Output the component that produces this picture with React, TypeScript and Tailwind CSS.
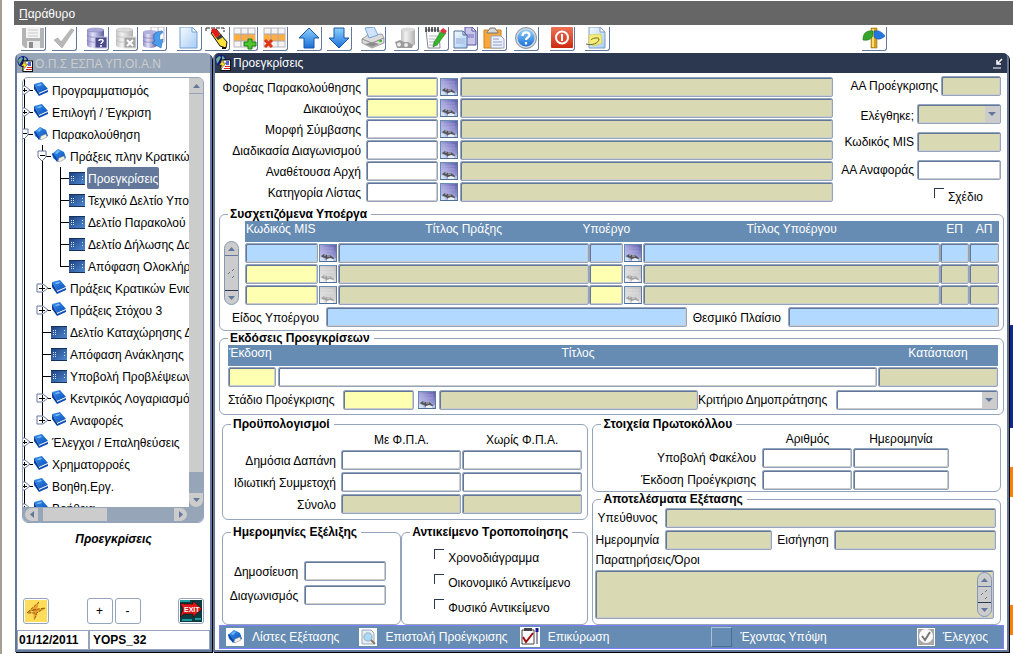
import type { ReactNode } from "react";

type Tone = "white" | "yellow" | "khaki" | "blue";

const TONES: Record<Tone, string> = {
  white: "bg-white",
  yellow: "bg-[#ffffb2]",
  khaki: "bg-[#d9d9b3]",
  blue: "bg-[#b2d9ff]",
};

const FIELD =
  "block h-5 w-full min-w-0 rounded-[2px] border border-[#93a4bb] px-1 shadow-[inset_1px_1px_0_#62779a,inset_-1px_-1px_0_#cccccc] outline-none";

function Field({ id, label, tone = "white" }: { id?: string; label?: string; tone?: Tone }) {
  return <input id={id} aria-label={label} type="text" className={`${FIELD} ${TONES[tone]}`} />;
}

function Select({ id, tone = "white" }: { id: string; tone?: Tone }) {
  return (
    <div className="relative">
      <select id={id} className={`${FIELD} appearance-none ${TONES[tone]}`}>
        <option></option>
      </select>
      <span className="pointer-events-none absolute top-[2px] right-[2px] bottom-[2px] flex w-[14px] items-center justify-center bg-[#cccccc]">
        <svg width="8" height="4" viewBox="0 0 8 4">
          <path d="M0 0h8L4 4z" fill="#62779a" />
        </svg>
      </span>
    </div>
  );
}

function LookupButton({ label, off = false }: { label: string; off?: boolean }) {
  return (
    <button
      type="button"
      aria-label={label}
      className="h-[18px] w-[18px] shrink-0 border border-[#668cb3] border-r-[#62779a] border-b-[#4d6d94]"
    >
      <svg width="16" height="16" viewBox="0 0 16 16">
        <rect width="16" height="16" fill={off ? "url(#lookupOff)" : "url(#lookupOn)"} />
        <path d="M1 3h13M1 6h13" stroke={off ? "#ececec" : "#b4b3e4"} strokeWidth="0.500" />
        <path d="M1 11l3-2 3 1 3 0 4 3v2H7l-2-2-3-1z" fill={off ? "#a4a4a4" : "#55555e"} />
        <path d="M0 12l3 1 2 3H0z" fill={off ? "#f2f2f2" : "#cfe2ee"} />
        <path d="M7 14l3-1 3 1v2H7z" fill={off ? "#fafafa" : "#e6f0f6"} />
        <path d="M4 10h2M7 11h3" stroke={off ? "#dddddd" : "#c4c4cc"} />
        <path d="M13 14l3-1v3h-3z" fill={off ? "#e2e2e2" : "#b4c4e0"} />
      </svg>
    </button>
  );
}

function Group({ title, className = "", children }: { title: string; className?: string; children: ReactNode }) {
  return (
    <fieldset className={`min-w-0 rounded-md border border-[#93a4bb] ${className}`}>
      <legend className="ml-2 h-[14px] px-[2px] pr-1 font-bold leading-[14px] whitespace-nowrap">{title}</legend>
      {children}
    </fieldset>
  );
}

function Check({ id, label }: { id: string; label: string }) {
  return (
    <div className="flex items-start gap-1">
      <input id={id} type="checkbox" className="h-[10px] w-[10px] appearance-none border-t border-l border-[#2b3850]" />
      <label htmlFor={id} className="pt-[2px] leading-[14px] whitespace-nowrap">{label}</label>
    </div>
  );
}

function VScroll({ className = "" }: { className?: string }) {
  return (
    <div className={`flex w-[15px] shrink-0 flex-col overflow-hidden rounded-full border border-[#8298b5] bg-[#cccccc] ${className}`}>
      <button type="button" aria-label="Πάνω" className="flex h-[14px] items-center justify-center border-b border-[#62779a]">
        <svg width="7" height="4" viewBox="0 0 7 4"><path d="M0 4L3.500 0 7 4z" fill="#62779a" /></svg>
      </button>
      <div className="flex flex-1 items-center justify-center">
        <svg width="7" height="9" viewBox="0 0 7 9"><path d="M0 5l2-2M4 2l2-2M4 9l2-2" stroke="#62779a" fill="none" /></svg>
      </div>
      <button type="button" aria-label="Κάτω" className="flex h-[14px] items-center justify-center border-t border-[#2b3850]">
        <svg width="7" height="4" viewBox="0 0 7 4"><path d="M0 0h7L3.500 4z" fill="#62779a" /></svg>
      </button>
    </div>
  );
}

/* ---------- toolbar drawings, all on a 24x24 grid ---------- */

function Gradients() {
  return (
    <svg width="0" height="0" className="absolute">
      <defs>
        <linearGradient id="dbPurple">
          <stop offset="0" stopColor="#8e8cc4" />
          <stop offset="0.35" stopColor="#e2e2f8" />
          <stop offset="1" stopColor="#5b5aa0" />
        </linearGradient>
        <linearGradient id="dbGray">
          <stop offset="0" stopColor="#c2c2c2" />
          <stop offset="0.35" stopColor="#f2f2f2" />
          <stop offset="1" stopColor="#b0b0b0" />
        </linearGradient>
        <linearGradient id="lookupOn" x1="0" y1="1" x2="1" y2="0">
          <stop offset="0" stopColor="#c8c8ee" />
          <stop offset="0.45" stopColor="#a9a8de" />
          <stop offset="1" stopColor="#5f5eac" />
        </linearGradient>
        <linearGradient id="lookupOff" x1="0" y1="1" x2="1" y2="0">
          <stop offset="0" stopColor="#e8e8e8" />
          <stop offset="1" stopColor="#c2c2c2" />
        </linearGradient>
        <linearGradient id="arrowBlue" x2="0" y2="1">
          <stop offset="0" stopColor="#8fd0ff" />
          <stop offset="1" stopColor="#1a6fd6" />
        </linearGradient>
        <linearGradient id="paper" x2="1" y2="1">
          <stop offset="0" stopColor="#f6fbff" />
          <stop offset="1" stopColor="#a8ccf4" />
        </linearGradient>
        <linearGradient id="red" x2="0" y2="1">
          <stop offset="0" stopColor="#ee7458" />
          <stop offset="1" stopColor="#cc2a10" />
        </linearGradient>
        <linearGradient id="screen" x2="1" y2="1">
          <stop offset="0" stopColor="#1c3f7e" />
          <stop offset="1" stopColor="#4f8ad0" />
        </linearGradient>
        <linearGradient id="cover" x2="1" y2="1">
          <stop offset="0" stopColor="#3a94f0" />
          <stop offset="1" stopColor="#0a4cb8" />
        </linearGradient>
      </defs>
    </svg>
  );
}

function Db({ gray = false }: { gray?: boolean }) {
  const line = gray ? "#b4b4b4" : "#8280bc";
  return (
    <>
      <path d="M3 3v15c0 4 17 4 17 0V3z" fill={gray ? "url(#dbGray)" : "url(#dbPurple)"} />
      <ellipse cx="11.500" cy="3" rx="8.500" ry="2" fill={gray ? "#dcdcdc" : "#a9a8d6"} stroke={line} strokeWidth="0.500" />
      <path d="M3 8c0 3 17 3 17 0M3 13c0 3 17 3 17 0" fill="none" stroke={line} strokeWidth="0.700" />
    </>
  );
}

function Grid() {
  return (
    <>
      <rect x="1" y="1" width="21" height="19" fill="#f4f4f4" stroke="#b8b8c0" />
      <rect x="1" y="7" width="21" height="7" fill="#ffae42" />
      <path d="M8 1v19M15 1v19M1 7h21M1 14h21" stroke="#a9a9b4" fill="none" />
    </>
  );
}

const TOOLS: { label: string; gap: string; icon: ReactNode }[] = [
  {
    label: "Αποθήκευση",
    gap: "",
    icon: (
      <>
        <path d="M1 1h22v20H4l-3-3z" fill="#b4b4b4" />
        <rect x="5" y="0" width="14" height="11" fill="#f4f4f4" />
        <path d="M7 3h10M7 6h10M7 9h10" stroke="#c8c8c8" />
        <rect x="6" y="14" width="13" height="7" fill="#ececec" />
        <rect x="8" y="15" width="4" height="6" fill="#8c8c8c" />
      </>
    ),
  },
  {
    label: "Επιβεβαίωση",
    gap: "ml-[6px]",
    icon: <path d="M2 13l4-2 3 4L19 2l3 1L10 21z" fill="#b8b8b8" stroke="#949494" strokeWidth="0.500" />,
  },
  {
    label: "Αναζήτηση",
    gap: "ml-[7px]",
    icon: (
      <>
        <Db />
        <rect x="11" y="10" width="12" height="11" fill="#4a4a8c" stroke="#c8c8e8" />
        <path d="M15 14c0-2 4-2 4 0 0 1.500-2 1.500-2 3M17 18v2" stroke="#fff" strokeWidth="1.500" fill="none" />
      </>
    ),
  },
  {
    label: "Ακύρωση αναζήτησης",
    gap: "ml-[4px]",
    icon: (
      <>
        <Db gray />
        <rect x="11" y="10" width="12" height="11" fill="#a6a6a6" stroke="#e2e2e2" />
        <path d="M14 13l6 6M20 13l-6 6" stroke="#fff" strokeWidth="2" />
      </>
    ),
  },
  {
    label: "Εκτέλεση αναζήτησης",
    gap: "ml-[4px]",
    icon: (
      <>
        <path d="M9 0h13v15H9zM16 0v15M9 6h13" fill="#fff" stroke="#b8b8cc" />
        <path d="M1 5v13c0 4 14 4 14 0V5z" fill="url(#dbPurple)" />
        <ellipse cx="8" cy="5" rx="7" ry="2" fill="#b2b1de" />
        <path d="M1 9c0 3 14 3 14 0M1 13c0 3 14 3 14 0" fill="none" stroke="#8280bc" strokeWidth="0.700" />
        <path d="M20 4c-8 0-10 5-7 10l-3 2 9 5 2-9-3 1c-1-4 0-6 3-8z" fill="#4a9cec" stroke="#1d5cac" strokeWidth="0.500" />
      </>
    ),
  },
  {
    label: "Νέο",
    gap: "ml-[10px]",
    icon: <path d="M3 0h12l5 5v16H3zM15 0v5h5" fill="url(#paper)" stroke="#6f9fd8" />,
  },
  {
    label: "Καθαρισμός",
    gap: "ml-[3px]",
    icon: (
      <>
        <path d="M1 1h18v4M1 1v3" stroke="#222" fill="none" strokeDasharray="4 1" />
        <path d="M6 6l5-4 11 13-1 6-6-2z" fill="#ffe23a" stroke="#111" />
        <path d="M6 4c1-3 4-3 6-1l3 5-4 3z" fill="#e01b1b" />
        <path d="M11 11l5-4 2 3-5 3z" fill="#3a3a3a" />
        <path d="M17 21h4" stroke="#111" strokeWidth="2" />
      </>
    ),
  },
  {
    label: "Εισαγωγή εγγραφής",
    gap: "ml-[3px]",
    icon: (
      <>
        <Grid />
        <path d="M15 12h4v3h4v4h-4v3h-4v-3h-4v-4h4z" fill="#4fc42c" stroke="#1e7d12" />
      </>
    ),
  },
  {
    label: "Διαγραφή εγγραφής",
    gap: "ml-[5px]",
    icon: (
      <>
        <Grid />
        <path d="M2 13l7 7M9 13l-7 7" stroke="#e03412" strokeWidth="3" />
      </>
    ),
  },
  {
    label: "Προηγούμενη εγγραφή",
    gap: "ml-[9px]",
    icon: <path d="M12 1l10 10h-5v10H7V11H2z" fill="url(#arrowBlue)" stroke="#1657a8" />,
  },
  {
    label: "Επόμενη εγγραφή",
    gap: "ml-[5px]",
    icon: <path d="M12 21l10-10h-5V1H7v10H2z" fill="url(#arrowBlue)" stroke="#1657a8" />,
  },
  {
    label: "Εκτύπωση",
    gap: "ml-[9px]",
    icon: (
      <>
        <path d="M1 12l6-4 14-1 2 4v5l-12 5L1 16z" fill="#dcdcdc" stroke="#7c7c7c" strokeWidth="0.700" />
        <path d="M4 1l9-1 4 8-9 3z" fill="#cfe4fb" stroke="#78a4d8" />
        <path d="M1 12l10 4 12-5" fill="none" stroke="#8e8e8e" />
        <path d="M4 17l8-2 6 2-7 3z" fill="#8d8d8d" />
        <rect x="18" y="13" width="3" height="2" fill="#45c02c" />
      </>
    ),
  },
  {
    label: "Λίστα τιμών",
    gap: "ml-[8px]",
    icon: (
      <>
        <path d="M7 2v15c0 3 14 3 14 0V2z" fill="url(#dbGray)" />
        <ellipse cx="14" cy="2.500" rx="7" ry="2" fill="#dcdcdc" />
        <path d="M1 15l5-2 4 2 4 0 5 3-1 3H3z" fill="#9c9c9c" />
        <circle cx="5" cy="17.500" r="2" fill="#ececec" />
        <circle cx="12" cy="18" r="2" fill="#ececec" />
      </>
    ),
  },
  {
    label: "Επεξεργασία",
    gap: "ml-[5px]",
    icon: (
      <>
        <path d="M2 3h13l1 18H4z" fill="#fdfdfd" stroke="#8888a0" />
        <path d="M2 0v5M5 0v5M8 0v5M11 0v5M14 0v5" stroke="#333" strokeWidth="1.500" />
        <path d="M5 9h9M5 12h6M5 15h7M5 18h9" stroke="#b6b6cc" />
        <path d="M18 3l4 3-9 12-4 2 1-5z" fill="#35b52a" stroke="#14680e" strokeWidth="0.500" />
        <path d="M16 4l3-3 4 3-3 3z" fill="#e23440" />
      </>
    ),
  },
  {
    label: "Αντιγραφή",
    gap: "ml-[4px]",
    icon: (
      <>
        <path d="M12 0h7l4 4v14H12zM19 0v4h4" fill="#c8c4ec" stroke="#5a529c" />
        <path d="M14 7h7v4h-7z" fill="#9f98d2" />
        <path d="M1 4h9l4 4v13H1zM10 4v4h4" fill="url(#paper)" stroke="#53729e" />
        <rect x="3" y="11" width="9" height="6" fill="#b2c8e8" />
      </>
    ),
  },
  {
    label: "Επικόλληση",
    gap: "ml-[4px]",
    icon: (
      <>
        <path d="M2 3h17v18H2z" fill="#f7a83c" stroke="#d07e18" />
        <path d="M5 6c0-2 2-2 3-5h5c1 3 3 3 3 5z" fill="#d8d8d8" stroke="#777" />
        <path d="M9 9h10l3 3v9H9z" fill="#eef2fc" stroke="#9aa4c8" />
        <path d="M11 12h6M11 15h9M11 18h9" stroke="#a8b8dc" strokeWidth="1.500" />
      </>
    ),
  },
  {
    label: "Βοήθεια",
    gap: "ml-[7px]",
    icon: (
      <>
        <circle cx="12" cy="11" r="10.500" fill="#d0d4dc" stroke="#8894a8" />
        <circle cx="12" cy="11" r="8.500" fill="url(#arrowBlue)" />
        <path d="M8.500 9c0-5 7-4.500 7-1 0 2.500-3.500 2.500-3.500 5M12 15v2.500" stroke="#fff" strokeWidth="2.200" fill="none" />
      </>
    ),
  },
  {
    label: "Έξοδος",
    gap: "ml-[11px]",
    icon: (
      <>
        <rect x="1" y="0" width="22" height="21" rx="1" fill="url(#red)" />
        <circle cx="12" cy="10.500" r="6" fill="none" stroke="#fff" strokeWidth="2" />
        <path d="M12 7v7" stroke="#fff" strokeWidth="2" />
      </>
    ),
  },
  {
    label: "Συνημμένα",
    gap: "ml-[10px]",
    icon: (
      <>
        <path d="M4 0h11l5 5v16H4zM15 0v5h5" fill="url(#paper)" stroke="#7e9cc4" />
        <path d="M4 8l12-1 1 9-8 3-5-2z" fill="#f7ec74" stroke="#c8ba4c" strokeWidth="0.500" />
        <path d="M1 17c6 2 13-1 13-5 0-2-7-1-8 1" fill="none" stroke="#5d6a30" />
      </>
    ),
  },
  {
    label: "Πλοήγηση",
    gap: "ml-[252px]",
    icon: (
      <>
        <path d="M9 1h6v20H9z" fill="#d9a01e" stroke="#86600c" strokeWidth="0.500" />
        <path d="M10 2h2v18h-2z" fill="#f8dc74" />
        <path d="M1 12c0-6 4-9 10-8v4c-1 4-5 6-10 5z" fill="#35a52c" stroke="#16640f" strokeWidth="0.500" />
        <path d="M12 4c5-1 8 1 11 5-4 4-8 4-11 1z" fill="#2478e0" stroke="#0f469a" strokeWidth="0.500" />
      </>
    ),
  },
];

function Toolbar() {
  return (
    <div role="toolbar" className="flex h-7 items-center overflow-hidden pl-[7px]">
      {TOOLS.map((tool) => (
        <button
          key={tool.label}
          type="button"
          aria-label={tool.label}
          className={`h-6 w-[25px] shrink-0 rounded-br-[3px] border-r border-b border-[#62779a] ${tool.gap}`}
        >
          <svg width="24" height="23" viewBox="0 0 24 23">{tool.icon}</svg>
        </button>
      ))}
    </div>
  );
}

function WindowIcon() {
  return (
    <svg width="16" height="16" viewBox="0 0 16 16" className="shrink-0">
      <circle cx="6" cy="5.500" r="5.500" fill="#14148c" />
      <path d="M1 4l3-3 2 1-2 4-2 3zM7 1l2 1 1 2-3 1z" fill="#6cb08c" />
      <rect x="6" y="5" width="9.500" height="10.500" fill="#fff" stroke="#111" />
      <path d="M11 7h3M11 9h3" stroke="#1a2ed0" strokeWidth="1.500" />
      <path d="M10 11.500h5M9 13.500h6" stroke="#e02020" strokeWidth="1.200" />
      <path d="M9 4L4 10h3l-2 5 6-7H8z" fill="#ffe42a" stroke="#222" strokeWidth="0.500" />
    </svg>
  );
}

/* ---------- navigation tree ---------- */

type Node = { level: 0 | 1 | 2; kind: "book" | "open" | "form"; text: string; selected?: boolean; last?: boolean };

const NODES: Node[] = [
  { level: 0, kind: "book", text: "Προγραμματισμός" },
  { level: 0, kind: "book", text: "Επιλογή / Έγκριση" },
  { level: 0, kind: "open", text: "Παρακολούθηση" },
  { level: 1, kind: "open", text: "Πράξεις πλην Κρατικώ" },
  { level: 2, kind: "form", text: "Προεγκρίσεις", selected: true },
  { level: 2, kind: "form", text: "Τεχνικό Δελτίο Υπο" },
  { level: 2, kind: "form", text: "Δελτίο Παρακολού" },
  { level: 2, kind: "form", text: "Δελτίο Δήλωσης Δα" },
  { level: 2, kind: "form", text: "Απόφαση Ολοκλήρ", last: true },
  { level: 1, kind: "book", text: "Πράξεις Κρατικών Ενια" },
  { level: 1, kind: "book", text: "Πράξεις Στόχου 3" },
  { level: 1, kind: "form", text: "Δελτίο Καταχώρησης Δ" },
  { level: 1, kind: "form", text: "Απόφαση Ανάκλησης" },
  { level: 1, kind: "form", text: "Υποβολή Προβλέψεων" },
  { level: 1, kind: "book", text: "Κεντρικός Λογαριασμό" },
  { level: 1, kind: "book", text: "Αναφορές", last: true },
  { level: 0, kind: "book", text: "Έλεγχοι / Επαληθεύσεις" },
  { level: 0, kind: "book", text: "Χρηματορροές" },
  { level: 0, kind: "book", text: "Βοηθη.Εργ." },
  { level: 0, kind: "book", text: "Βοήθεια" },
];

function Book({ open = false }: { open?: boolean }) {
  if (open) {
    return (
      <g>
        <path d="M1 6l6-5 6 3 2 6-8 4-5-4z" fill="url(#cover)" />
        <path d="M1 6l5 8v-3L2 5z" fill="#0a3f9c" />
        <path d="M7 13l1-3 5-2 1 3-6 3z" fill="#f4f0e4" stroke="#888" strokeWidth="0.500" />
        <path d="M4 5l3-3 2 1-3 3z" fill="#6cbafc" />
      </g>
    );
  }
  return (
    <g>
      <path d="M1 2l8-2 6 7-9 4z" fill="url(#cover)" />
      <path d="M1 2l5 9v3L1 7z" fill="#0a3f9c" />
      <path d="M6 11l9-4v1l-8 4z" fill="#eee9dc" />
      <path d="M6 12l9-4v2l-9 4z" fill="#0a4cb8" />
      <path d="M4 3l4-1 1 1-4 1z" fill="#8cc8fc" />
    </g>
  );
}

function Branch({ node }: { node: Node }) {
  const width = node.kind === "form" ? 46 + (node.level - 1) * 18 : 28 + node.level * 18;
  const knob = 1 + node.level * 18;
  const plus = node.level > 0;
  const nested = node.level === 2;
  return (
    <svg width={width} height="22" viewBox={`0 0 ${width} 22`} className="shrink-0">
      <g stroke="#000" fill="none" shapeRendering="crispEdges">
        <path d="M1 0v22" />
        {node.level > 0 && <path d={node.level === 1 && node.last ? "M19 0v11" : "M19 0v22"} />}
        {nested && <path d={node.last ? "M37 0v11h10" : "M37 0v22M37 11h10"} />}
        {!nested && <path d={`M${knob} 11h9`} />}
      </g>
      {node.kind === "book" && (
        <>
          <path d={`M${knob - 5} 7h6l5 4-5 4h-6z`} fill="#fff" stroke="#62779a" />
          <path d={plus ? `M${knob - 3} 11h6M${knob} 8v6` : `M${knob - 2} 11h5M${knob} 9v4`} stroke="#000" shapeRendering="crispEdges" />
        </>
      )}
      {node.kind === "open" && (
        <>
          <path d={`M${knob - 4} 6h8v6l-4 4-4-4z`} fill="#fff" stroke="#62779a" />
          <path d={`M${knob - 2} 10h5`} stroke="#000" shapeRendering="crispEdges" />
        </>
      )}
      {node.kind === "form" ? (
        <g transform={`translate(${width - 18} 5)`} shapeRendering="crispEdges">
          <rect width="16" height="13" fill="url(#screen)" />
          <path d="M0 0h16v1H0zM0 12h16v1H0z" fill="#16305c" />
          <path d="M2 4h1v1H2zM4 4h1v1H4zM2 6h1v1H2zM4 6h1v1H4zM2 8h1v1H2zM4 8h1v1H4zM13 4h1v1h-1zM13 7h1v1h-1z" fill="#cfe2ff" />
        </g>
      ) : (
        <g transform={`translate(${width - 18} 3)`}>
          <Book open={node.kind === "open"} />
        </g>
      )}
    </svg>
  );
}

const BOX = "flex h-[26px] w-[26px] items-center justify-center rounded-[3px] border border-[#93a4bb] bg-white";

function Navigator() {
  return (
    <aside className="flex w-[197px] shrink-0 flex-col rounded-t-md border-2 border-[#62779a] border-t-[#96a5b8] bg-white shadow-[1px_1px_0_#000]">
      <header className="flex h-[18px] items-center gap-[2px] bg-[#96a5b8] text-[#cccccc]">
        <WindowIcon />
        <h2 className="whitespace-nowrap">Ο.Π.Σ ΕΣΠΑ ΥΠ.ΟΙ.Α.Ν</h2>
      </header>
      <div className="mr-[6px] ml-[5px] mt-1 overflow-hidden rounded-md border border-[#93a4bb]">
        <div className="flex h-[429px]">
          <ul className="min-w-0 flex-1 overflow-hidden pt-px">
            {NODES.map((node) => (
              <li key={node.text} className="flex h-[22px] items-center">
                <Branch node={node} />
                <button
                  type="button"
                  className={`h-[22px] rounded-[2px] px-px pt-[2px] whitespace-nowrap ${node.selected ? "bg-[#62779a] text-white" : ""}`}
                >
                  {node.text}
                </button>
              </li>
            ))}
          </ul>
          <div className="flex w-[14px] shrink-0 flex-col bg-[#96a5b8]">
            <button type="button" aria-label="Πάνω" className="flex h-4 items-center justify-center border-b border-[#93a4bb] bg-[#cccccc]">
              <svg width="7" height="4" viewBox="0 0 7 4"><path d="M0 4L3.500 0 7 4z" fill="#62779a" /></svg>
            </button>
            <div className="flex-1 bg-[#cccccc]" />
            <div className="h-[21px]" />
            <button type="button" aria-label="Κάτω" className="flex h-[14px] items-center justify-center rounded-b-full bg-[#cccccc]">
              <svg width="7" height="4" viewBox="0 0 7 4"><path d="M0 0h7L3.500 4z" fill="#62779a" /></svg>
            </button>
          </div>
        </div>
        <div className="flex h-[15px] items-center bg-[#96a5b8] pr-4 pl-[2px]">
          <button type="button" aria-label="Αριστερά" className="flex h-[13px] w-[13px] items-center justify-center rounded-l-full bg-[#cccccc]">
            <svg width="4" height="7" viewBox="0 0 4 7"><path d="M4 0v7L0 3.500z" fill="#62779a" /></svg>
          </button>
          <div className="ml-[5px] h-[13px] w-16 bg-[#cccccc]" />
          <button type="button" aria-label="Δεξιά" className="ml-auto flex h-[13px] w-[13px] items-center justify-center rounded-r-full bg-[#cccccc]">
            <svg width="4" height="7" viewBox="0 0 4 7"><path d="M0 0v7l4-3.500z" fill="#62779a" /></svg>
          </button>
        </div>
      </div>
      <p className="mt-2 text-center font-bold italic">Προεγκρίσεις</p>
      <div className="mt-auto mb-[6px] flex items-center justify-between px-[6px]">
        <button type="button" aria-label="Μετάβαση" className={BOX}>
          <svg width="22" height="22" viewBox="0 0 22 22">
            <rect width="22" height="22" fill="#ffdc5a" />
            <path d="M14 2L4 11l8-1M4 11l-2 2h8M8 10l12-2-10 6 2 0-3 6" fill="#f0a030" stroke="#96600e" strokeDasharray="3 1" />
          </svg>
        </button>
        <div className="flex gap-[2px]">
          <button type="button" className={BOX}>+</button>
          <button type="button" className={BOX}>-</button>
        </div>
        <button type="button" aria-label="Έξοδος" className={BOX}>
          <svg width="22" height="22" viewBox="0 0 22 22">
            <rect width="22" height="22" fill="#0b3c40" />
            <path d="M0 1h10M2 20h10M15 19h6" stroke="#1f9a9e" strokeWidth="2" />
            <path d="M0 3l5 1h8V1l9 8-9 8v-3H4l-4 3 3-8z" fill="#e01818" stroke="#000" strokeWidth="0.500" />
            <text x="4" y="12" fontSize="7" fontWeight="bold" fill="#fff">EXIT</text>
          </svg>
        </button>
      </div>
      <footer className="flex h-5 border border-[#93a4bb] font-bold">
        <span className="w-[72px] border-r-2 border-[#93a4bb] pl-px leading-[18px]">01/12/2011</span>
        <span className="flex-1 pl-[3px] leading-[18px]">YOPS_32</span>
      </footer>
    </aside>
  );
}

/* ---------- form ---------- */

const LOOKUPS: { id: string; label: string; tone: Tone }[] = [
  { id: "agency", label: "Φορέας Παρακολούθησης", tone: "yellow" },
  { id: "beneficiary", label: "Δικαιούχος", tone: "yellow" },
  { id: "contract", label: "Μορφή Σύμβασης", tone: "white" },
  { id: "procedure", label: "Διαδικασία Διαγωνισμού", tone: "white" },
  { id: "authority", label: "Αναθέτουσα Αρχή", tone: "white" },
  { id: "category", label: "Κατηγορία Λίστας", tone: "white" },
];

function Identity() {
  return (
    <section className="flex pt-[3px] pb-[3px]">
      <div className="min-w-0 flex-1">
        {LOOKUPS.map((row) => (
          <div key={row.id} className="flex h-[21px] items-center">
            <label htmlFor={row.id} className="w-[142px] shrink-0 pt-[2px] text-right whitespace-nowrap">{row.label}</label>
            <div className="mr-[2px] ml-[5px] w-[72px] shrink-0"><Field id={row.id} tone={row.tone} /></div>
            <LookupButton label={`Λίστα: ${row.label}`} />
            <div className="ml-[2px] min-w-0 flex-1"><Field label={`Περιγραφή: ${row.label}`} tone="khaki" /></div>
          </div>
        ))}
      </div>
      <div className="mr-[3px] flex w-[168px] shrink-0 flex-col gap-2">
        <div className="flex items-center justify-end gap-[3px]">
          <label htmlFor="number">ΑΑ Προέγκρισης</label>
          <div className="w-[60px]"><Field id="number" tone="khaki" /></div>
        </div>
        <div className="flex items-center justify-end gap-[3px]">
          <label htmlFor="checked" className="pt-1">Ελέγθηκε;</label>
          <div className="w-[84px]"><Select id="checked" tone="khaki" /></div>
        </div>
        <div className="flex items-center justify-end gap-[3px]">
          <label htmlFor="mis">Κωδικός MIS</label>
          <div className="w-[84px]"><Field id="mis" tone="khaki" /></div>
        </div>
        <div className="flex items-center justify-end gap-[3px]">
          <label htmlFor="ref">ΑΑ Αναφοράς</label>
          <div className="w-[84px]"><Field id="ref" /></div>
        </div>
        <div className="self-end pr-[18px]"><Check id="draft" label="Σχέδιο" /></div>
      </div>
    </section>
  );
}

function Subprojects() {
  return (
    <Group title="Συσχετιζόμενα Υποέργα">
      <div className="flex pr-1 pl-1">
        <VScroll className="mt-5 mr-[6px]" />
        <table className="min-w-0 flex-1 table-fixed border-collapse">
          <colgroup>
            <col className="w-[73px]" />
            <col className="w-5" />
            <col className="w-1/3" />
            <col className="w-[34px]" />
            <col className="w-5" />
            <col />
            <col className="w-[29px]" />
            <col className="w-[30px]" />
          </colgroup>
          <thead>
            <tr className="h-[21px] bg-[#668cb3] text-left align-top text-white">
              <th className="p-0 pl-px font-normal whitespace-nowrap" colSpan={2}>Κωδικός MIS</th>
              <th className="p-0 text-center font-normal">Τίτλος Πράξης</th>
              <th className="p-0 pr-5 text-center font-normal whitespace-nowrap" colSpan={2}>
                <span className="-mx-2">Υποέργο</span>
              </th>
              <th className="p-0 text-center font-normal">Τίτλος Υποέργου</th>
              <th className="p-0 text-center font-normal">ΕΠ</th>
              <th className="p-0 text-center font-normal">ΑΠ</th>
            </tr>
          </thead>
          <tbody>
            {[0, 1, 2].map((i) => {
              const key: Tone = i === 0 ? "blue" : "yellow";
              const rest: Tone = i === 0 ? "blue" : "khaki";
              return (
                <tr key={i} className="h-[21px]">
                  <td className="p-0"><Field label="Κωδικός MIS" tone={key} /></td>
                  <td className="p-0 pl-px"><div className="flex"><LookupButton label="Λίστα πράξεων" off={i > 0} /></div></td>
                  <td className="p-0"><Field label="Τίτλος Πράξης" tone={rest} /></td>
                  <td className="p-0"><Field label="Υποέργο" tone={key} /></td>
                  <td className="p-0 pl-px"><div className="flex"><LookupButton label="Λίστα υποέργων" off={i > 0} /></div></td>
                  <td className="p-0"><Field label="Τίτλος Υποέργου" tone={rest} /></td>
                  <td className="p-0"><Field label="ΕΠ" tone={rest} /></td>
                  <td className="p-0"><Field label="ΑΠ" tone={rest} /></td>
                </tr>
              );
            })}
          </tbody>
        </table>
      </div>
      <div className="flex items-center pt-[2px] pr-1 pb-[3px] pl-3">
        <label htmlFor="kind" className="w-[94px] shrink-0 pt-[2px]">Είδος Υποέργου</label>
        <div className="min-w-0 flex-[360]"><Field id="kind" tone="blue" /></div>
        <label htmlFor="legal" className="w-[101px] shrink-0 pt-[2px] pl-[6px]">Θεσμικό Πλαίσιο</label>
        <div className="min-w-0 flex-[211]"><Field id="legal" tone="blue" /></div>
      </div>
    </Group>
  );
}

function Versions() {
  return (
    <Group title="Εκδόσεις Προεγκρίσεων">
      <div className="pr-[5px] pl-2">
        <table className="w-full table-fixed border-collapse">
          <colgroup>
            <col className="w-[50px]" />
            <col />
            <col className="w-[120px]" />
          </colgroup>
          <thead>
            <tr className="h-[21px] bg-[#668cb3] align-top text-white">
              <th className="p-0 pl-px text-left font-normal whitespace-nowrap">Έκδοση</th>
              <th className="p-0 text-center font-normal">Τίτλος</th>
              <th className="p-0 text-center font-normal">Κατάσταση</th>
            </tr>
          </thead>
          <tbody>
            <tr className="h-[22px]">
              <td className="p-0 pr-[2px]"><Field label="Έκδοση" tone="yellow" /></td>
              <td className="p-0 pr-px"><Field label="Τίτλος" /></td>
              <td className="p-0"><Field label="Κατάσταση" tone="khaki" /></td>
            </tr>
          </tbody>
        </table>
        <div className="flex items-center pt-[2px] pb-1">
          <label htmlFor="stage" className="w-[115px] shrink-0">Στάδιο Προέγκρισης</label>
          <div className="mr-1 w-[71px] shrink-0"><Field id="stage" tone="yellow" /></div>
          <LookupButton label="Λίστα σταδίων" />
          <div className="ml-[3px] min-w-0 flex-1"><Field label="Περιγραφή σταδίου" tone="khaki" /></div>
          <label htmlFor="criterion" className="w-[138px] shrink-0">Κριτήριο Δημοπράτησης</label>
          <div className="w-[162px] shrink-0"><Select id="criterion" /></div>
        </div>
      </div>
    </Group>
  );
}

function Budgets() {
  const rows: { label: string; tone: Tone }[] = [
    { label: "Δημόσια Δαπάνη", tone: "white" },
    { label: "Ιδιωτική Συμμετοχή", tone: "white" },
    { label: "Σύνολο", tone: "khaki" },
  ];
  return (
    <Group title="Προϋπολογισμοί">
      <table className="mb-1 w-full table-fixed border-collapse">
        <colgroup>
          <col className="w-[118px]" />
          <col />
          <col />
          <col className="w-[5px]" />
        </colgroup>
        <thead>
          <tr className="h-[18px]">
            <td className="p-0" />
            <th className="p-0 text-center font-normal">Με Φ.Π.Α.</th>
            <th className="p-0 text-center font-normal">Χωρίς Φ.Π.Α.</th>
            <td className="p-0" />
          </tr>
        </thead>
        <tbody>
          {rows.map((row) => (
            <tr key={row.label} className="h-[22px]">
              <th className="p-0 pt-[2px] pr-[5px] text-right font-normal whitespace-nowrap">{row.label}</th>
              <td className="p-0 pr-px"><Field label={`${row.label}, Με Φ.Π.Α.`} tone={row.tone} /></td>
              <td className="p-0"><Field label={`${row.label}, Χωρίς Φ.Π.Α.`} tone={row.tone} /></td>
              <td className="p-0" />
            </tr>
          ))}
        </tbody>
      </table>
    </Group>
  );
}

function Milestones() {
  return (
    <Group title="Ημερομηνίες Εξέλιξης">
      <div className="flex flex-col gap-1 pt-[22px] pr-[14px]">
        {[
          { id: "published", label: "Δημοσίευση" },
          { id: "tender", label: "Διαγωνισμός" },
        ].map((row) => (
          <div key={row.id} className="flex items-center gap-[6px]">
            <label htmlFor={row.id} className="flex-1 pt-[2px] text-right">{row.label}</label>
            <div className="w-[82px]"><Field id={row.id} /></div>
          </div>
        ))}
      </div>
    </Group>
  );
}

function Changes() {
  return (
    <Group title="Αντικείμενο Τροποποίησης">
      <div className="flex flex-col gap-[9px] pt-[10px] pl-8">
        <Check id="schedule" label="Χρονοδιάγραμμα" />
        <Check id="financial" label="Οικονομικό Αντικείμενο" />
        <Check id="physical" label="Φυσικό Αντικείμενο" />
      </div>
    </Group>
  );
}

function Protocol() {
  return (
    <Group title="Στοιχεία Πρωτοκόλλου">
      <table className="w-full table-fixed border-collapse">
        <colgroup>
          <col />
          <col className="w-[91px]" />
          <col className="w-[96px]" />
          <col className="w-[51px]" />
        </colgroup>
        <thead>
          <tr className="h-4">
            <td className="p-0" />
            <th className="p-0 text-center font-normal leading-4">Αριθμός</th>
            <th className="p-0 text-center font-normal leading-4">Ημερομηνία</th>
            <td className="p-0" />
          </tr>
        </thead>
        <tbody>
          {["Υποβολή Φακέλου", "Έκδοση Προέγκρισης"].map((label) => (
            <tr key={label} className="h-[22px]">
              <th className="p-0 pr-[6px] text-right font-normal">{label}</th>
              <td className="p-0 pr-px"><Field label={`${label}, Αριθμός`} /></td>
              <td className="p-0"><Field label={`${label}, Ημερομηνία`} /></td>
              <td className="p-0" />
            </tr>
          ))}
        </tbody>
      </table>
    </Group>
  );
}

function Results() {
  return (
    <Group title="Αποτελέσματα Εξέτασης" className="flex-1">
      <div className="flex flex-col gap-[2px] pt-[2px] pr-[4px] pl-[2px]">
        <div className="flex items-center">
          <label htmlFor="officer" className="w-[70px] pr-2 text-right">Υπεύθυνος</label>
          <div className="min-w-0 flex-1"><Field id="officer" tone="khaki" /></div>
        </div>
        <div className="flex items-center">
          <label htmlFor="resultDate" className="w-[70px]">Ημερομηνία</label>
          <div className="min-w-0 flex-[107]"><Field id="resultDate" tone="khaki" /></div>
          <label htmlFor="proposal" className="w-[62px] pl-[5px]">Εισήγηση</label>
          <div className="min-w-0 flex-[162]"><Field id="proposal" tone="khaki" /></div>
        </div>
        <label htmlFor="remarks" className="leading-4">Παρατηρήσεις/Όροι</label>
        <div className="mr-[2px] flex h-[49px] rounded-[2px] border border-[#93a4bb] bg-[#d9d9b3] p-px shadow-[inset_1px_1px_0_#62779a,inset_-1px_-1px_0_#cccccc]">
          <textarea id="remarks" className="min-w-0 flex-1 resize-none bg-transparent outline-none" />
          <VScroll />
        </div>
      </div>
    </Group>
  );
}

const ACTION = "flex items-center gap-2 text-white whitespace-nowrap";
const ACTION_ICON = "h-[18px] w-[18px] border border-white bg-white";

function Actions() {
  return (
    <footer className="flex h-6 items-center border border-[#8080ff] bg-[#668cb3] pr-[15px] pl-[6px]">
      <button type="button" className={ACTION}>
        <svg className={ACTION_ICON} viewBox="0 0 16 16"><Book open /></svg>
        Λίστες Εξέτασης
      </button>
      <button type="button" className={`ml-[20px] ${ACTION}`}>
        <svg className={ACTION_ICON} viewBox="0 0 16 16">
          <path d="M2 1h9l3 3v11H2z" fill="#e6eef8" stroke="#9ab" />
          <circle cx="8" cy="8" r="4" fill="#a6dcf8" stroke="#a8bccc" strokeWidth="1.500" />
          <path d="M11 11l4 4" stroke="#8a7a6a" strokeWidth="2" />
        </svg>
        Επιστολή Προέγκρισης
      </button>
      <button type="button" className={`ml-[12px] ${ACTION}`}>
        <svg className="h-5 w-5 border border-white bg-white" viewBox="0 0 18 18">
          <path d="M1 2h12v14H1z" fill="#fff" stroke="#444" />
          <path d="M3 0h8v3H3z" fill="#444" />
          <path d="M16 4v12" stroke="#99a" strokeWidth="2" />
          <path d="M16 0v4" stroke="#1a1a90" strokeWidth="3" />
          <path d="M2 9l3 5L12 5" fill="none" stroke="#9c1010" strokeWidth="2" />
        </svg>
        Επικύρωση
      </button>
      <button type="button" className={`ml-auto ${ACTION}`}>
        <span className="h-5 w-[21px] border border-[#4a6d94] border-t-[#a9c2dc] border-l-[#a9c2dc]" />
        Έχοντας Υπόψη
      </button>
      <button type="button" className={`ml-[90px] ${ACTION}`}>
        <svg className={ACTION_ICON} viewBox="0 0 16 16">
          <rect width="16" height="16" fill="#a8a8a8" />
          <circle cx="8" cy="7" r="7" fill="#fafafa" />
          <path d="M4 7l3 4 5-8" fill="none" stroke="#777" strokeWidth="2" />
        </svg>
        Έλεγχος
      </button>
    </footer>
  );
}

export default function App() {
  return (
    <div className="flex min-h-screen overflow-hidden bg-white font-['Liberation_Sans',Arial,sans-serif] text-[12px] leading-4 text-black">
      <Gradients />
      <div className="mr-3 w-[2px] shrink-0 bg-[#a39f92]" />
      <div className="flex min-w-0 flex-1 flex-col pt-px">
        <nav className="flex h-6 items-center bg-[#666666] pt-[2px] pl-[5px] text-white">
          <button type="button"><u>Π</u>αράθυρο</button>
        </nav>
        <Toolbar />
        <div className="flex flex-1 pb-[2px] pl-px">
          <Navigator />
          <main className="ml-px flex min-w-0 flex-1 flex-col rounded-t-md border-2 border-t-0 border-[#62779a] bg-white shadow-[1px_1px_0_#000]">
            <header className="flex h-5 items-center gap-[2px] rounded-t bg-[#2b3850] pr-1 text-white">
              <WindowIcon />
              <h1>Προεγκρίσεις</h1>
              <button type="button" aria-label="Ελαχιστοποίηση" className="ml-auto">
                <svg width="10" height="11" viewBox="0 0 10 11">
                  <path d="M0 10h8" stroke="#fff" />
                  <path d="M9 1L5 5M4 2v4h4" stroke="#fff" strokeWidth="1.500" fill="none" />
                </svg>
              </button>
            </header>
            <div className="flex flex-1 flex-col pr-[3px] pb-px pl-1">
              <Identity />
              <Subprojects />
              <Versions />
              <div className="grid flex-1 grid-cols-[366fr_408fr] gap-1 px-[3px] pt-[2px]">
                <div className="flex min-w-0 flex-col gap-[5px]">
                  <Budgets />
                  <div className="grid flex-1 grid-cols-[179fr_187fr]">
                    <Milestones />
                    <Changes />
                  </div>
                </div>
                <div className="flex min-w-0 flex-col">
                  <Protocol />
                  <Results />
                </div>
              </div>
              <Actions />
            </div>
          </main>
          <div className="ml-px flex w-[3px] shrink-0 flex-col">
            <div className="h-[272px]" />
            <div className="h-[103px] bg-[#0b2a8c]" />
            <div className="h-[39px]" />
            <div className="h-[30px] bg-[#ff8000]" />
            <div className="h-[108px]" />
            <div className="h-[30px] bg-[#ff8000]" />
          </div>
        </div>
      </div>
    </div>
  );
}
